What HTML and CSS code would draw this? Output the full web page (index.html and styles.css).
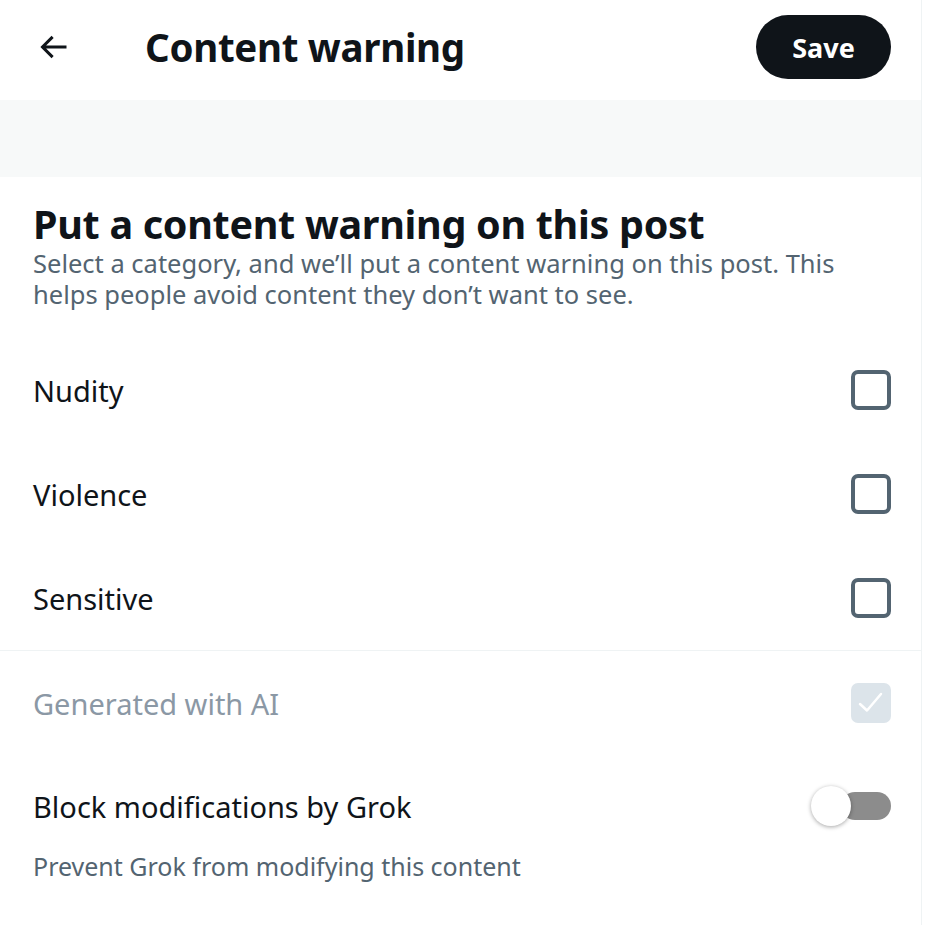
FILE: index.html
```html
<!DOCTYPE html>
<html lang="en">
<head>
  <meta charset="UTF-8">
  <meta name="viewport" content="width=device-width, initial-scale=1.0">
  <title>Content warning</title>
  <link rel="stylesheet" href="styles.css">
</head>
<body>
  <div class="page">
    <header class="topbar">
      <button class="back" aria-label="Back">
        <svg viewBox="0 0 24 24" width="36" height="36">
          <path d="M7.414 13l5.043 5.04-1.414 1.42L3.586 12l7.457-7.46 1.414 1.42L7.414 11H21v2H7.414z"/>
        </svg>
      </button>
      <h1 class="title">Content warning</h1>
      <button class="save">Save</button>
    </header>

    <div class="band"></div>

    <section class="intro">
      <h2>Put a content warning on this post</h2>
      <p>Select a category, and we’ll put a content warning on this post. This helps people avoid content they don’t want to see.</p>
    </section>

    <!-- categories -->
    <div class="options">
      <label class="row">
        <span>Nudity</span>
        <span class="box"></span>
      </label>
      <label class="row">
        <span>Violence</span>
        <span class="box"></span>
      </label>
      <label class="row">
        <span>Sensitive</span>
        <span class="box"></span>
      </label>
    </div>

    <div class="options divided">
      <label class="row disabled">
        <span>Generated with AI</span>
        <span class="box checked">
          <svg viewBox="0 0 40 40" width="40" height="40">
            <polyline points="9,21 16,27.5 30,11"/>
          </svg>
        </span>
      </label>
      <div class="row grok">
        <span>Block modifications by Grok</span>
        <span class="toggle"><span class="knob"></span></span>
      </div>
      <p class="hint">Prevent Grok from modifying this content</p>
    </div>
  </div>
</body>
</html>
```

FILE: styles.css
```css
* {
  margin: 0;
  padding: 0;
  box-sizing: border-box;
}

body {
  font-family: 'Noto Sans', 'Open Sans', sans-serif;
  background-color: #fff;
  color: #0f1419;
}

.page {
  width: 922px;
  min-height: 925px;
  border-right: 1px solid #eff3f4;
}

.topbar {
  height: 100px;
  display: flex;
  align-items: center;
  padding: 0 30px 6px 35px;
}

.back {
  border: none;
  background: none;
  width: 36px;
  height: 36px;
  display: flex;
  align-items: center;
  justify-content: center;
}

.back svg {
  fill: #0f1419;
}

.title {
  flex: 1;
  margin-left: 74px;
  font-size: 38.5px;
  font-weight: 700;
  letter-spacing: -0.3px;
}

.save {
  border: none;
  background-color: #0f1419;
  color: #fff;
  font-family: inherit;
  font-size: 27px;
  font-weight: 700;
  height: 64px;
  width: 135px;
  border-radius: 32px;
}

.band {
  height: 77px;
  background-color: #f7f9f9;
}

.intro {
  padding: 23px 30px 28px 33px;
}

.intro h2 {
  font-size: 39.5px;
  font-weight: 700;
  line-height: 48px;
  letter-spacing: -0.3px;
}

.intro p {
  font-size: 25.5px;
  line-height: 31px;
  color: #536471;
}

.divided {
  border-top: 1px solid #eff3f4;
}

.row {
  height: 104px;
  display: flex;
  align-items: center;
  justify-content: space-between;
  padding: 0 30px 0 33px;
  font-size: 29px;
}

.row.disabled {
  color: #8b98a5;
}

.box {
  width: 40px;
  height: 40px;
  border: 4px solid #536471;
  border-radius: 7px;
}

.box.checked {
  border: none;
  background-color: #dce4ea;
  display: flex;
  align-items: center;
  justify-content: center;
}

.box.checked svg {
  fill: none;
  stroke: #fff;
  stroke-width: 2.5;
  stroke-linecap: round;
  stroke-linejoin: round;
}

.row.grok {
  height: 96px;
  padding-top: 6px;
}

.toggle {
  position: relative;
  width: 80px;
  height: 28px;
  display: flex;
  justify-content: flex-end;
}

.toggle::before {
  content: "";
  width: 50px;
  height: 28px;
  border-radius: 14px;
  background-color: #8c8c8c;
}

.knob {
  position: absolute;
  left: 0;
  top: -6px;
  width: 40px;
  height: 40px;
  border-radius: 50%;
  background-color: #fff;
  box-shadow: 0 1px 4px rgba(0, 0, 0, 0.35);
}

.hint {
  padding: 0 30px 0 33px;
  font-size: 25px;
  line-height: 31px;
  color: #536471;
}
```
